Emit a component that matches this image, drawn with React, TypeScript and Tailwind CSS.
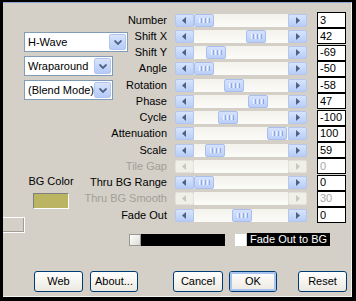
import React from "react";

type Row = { label: string; value: string; thumb: number | null; disabled?: boolean };

const rows: Row[] = [
  { label: "Number", value: "3", thumb: 195 },
  { label: "Shift X", value: "42", thumb: 247 },
  { label: "Shift Y", value: "-69", thumb: 207 },
  { label: "Angle", value: "-50", thumb: 195 },
  { label: "Rotation", value: "-58", thumb: 225 },
  { label: "Phase", value: "47", thumb: 249 },
  { label: "Cycle", value: "-100", thumb: 219 },
  { label: "Attenuation", value: "100", thumb: 268 },
  { label: "Scale", value: "59", thumb: 206 },
  { label: "Tile Gap", value: "0", thumb: null, disabled: true },
  { label: "Thru BG Range", value: "0", thumb: 195 },
  { label: "Thru BG Smooth", value: "30", thumb: null, disabled: true },
  { label: "Fade Out", value: "0", thumb: 233 },
];

function Arrow({ dir, disabled }: { dir: "l" | "r"; disabled?: boolean }) {
  const c = disabled ? "#c9c7ba" : "#4d6185";
  return (
    <div
      className={
        "w-[19px] h-[13px] rounded-[2px] flex items-center justify-center border " +
        (disabled
          ? "bg-[#f0efe8] border-[#e4e2d8]"
          : "bg-gradient-to-b from-[#d8e4fc] to-[#b8cdf6] border-[#b2c6ee]")
      }
    >
      <svg width="5" height="7" viewBox="0 0 5 7">
        {dir === "l" ? (
          <path d="M4 0 L0 3.5 L4 7 Z" fill={c} />
        ) : (
          <path d="M1 0 L5 3.5 L1 7 Z" fill={c} />
        )}
      </svg>
    </div>
  );
}

function Thumb({ left }: { left: number }) {
  return (
    <div
      className="absolute top-0 h-[13px] w-[20px] rounded-[2px] border border-[#a8bfee] bg-gradient-to-b from-[#d6e2fd] to-[#bccff8] flex items-center justify-center gap-[1px]"
      style={{ left }}
    >
      <div className="w-[1px] h-[5px] bg-[#eef3fe]" />
      <div className="w-[1px] h-[5px] bg-[#8ea8e0]" />
      <div className="w-[1px] h-[5px] bg-[#eef3fe]" />
      <div className="w-[1px] h-[5px] bg-[#8ea8e0]" />
      <div className="w-[1px] h-[5px] bg-[#eef3fe]" />
      <div className="w-[1px] h-[5px] bg-[#8ea8e0]" />
    </div>
  );
}

function Scroll({ row }: { row: Row }) {
  return (
    <div className="flex w-[132px] h-[13px]">
      <Arrow dir="l" disabled={row.disabled} />
      <div className="relative flex-1 h-[13px] bg-gradient-to-b from-[#f3f2ec] to-[#fbfbf8]">
        {row.thumb !== null && <Thumb left={row.thumb - 195} />}
      </div>
      <Arrow dir="r" disabled={row.disabled} />
    </div>
  );
}

function Combo({ text, w }: { text: string; w: string }) {
  return (
    <div className={"h-[20px] bg-white border border-[#7f9db9] flex items-center " + w}>
      <span className="flex-1 pl-[3px] text-[11px] leading-none text-black whitespace-nowrap overflow-hidden">{text}</span>
      <div className="w-[17px] h-[16px] mr-[1px] rounded-[2px] bg-gradient-to-b from-[#d8e4fc] to-[#b4caf6] border border-[#b2c6ee] flex items-center justify-center">
        <svg width="8" height="5" viewBox="0 0 8 5">
          <path d="M0.5 0.5 L4 4 L7.5 0.5" stroke="#4d6185" strokeWidth="1.8" fill="none" />
        </svg>
      </div>
    </div>
  );
}

function Btn({ text, w, def }: { text: string; w: string; def?: boolean }) {
  return (
    <div
      className={
        "h-[21px] rounded-[3px] border border-[#003c74] bg-gradient-to-b from-[#ffffff] to-[#ece9e0] flex items-center justify-center text-[11px] text-black " +
        w
      }
    >
      <div
        className={
          "w-full h-full rounded-[2px] flex items-center justify-center " +
          (def ? "border-2 border-[#a9c4f0]" : "")
        }
      >
        {text}
      </div>
    </div>
  );
}

export default function App() {
  return (
    <div
      className="w-[356px] h-[301px] bg-black pl-[3px] pt-[2px] overflow-hidden"
      style={{ fontFamily: '"Liberation Sans", Arial, sans-serif' }}
    >
      <div className="w-[349px] h-[295px] bg-[#d4d0c8] border-t border-[#8ea6d4] border-r border-r-[#f4f3ef] border-b border-b-[#f4f3ef] flex flex-col">
        <div className="grid h-[226px]">
          {/* parameter rows */}
          <div className="col-start-1 row-start-1 pt-[9px] flex flex-col">
            {rows.map((r) => (
              <div key={r.label} className="h-[16.25px] flex items-center">
                <div
                  className={
                    "w-[164px] text-right text-[11px] leading-none whitespace-nowrap " +
                    (r.disabled ? "text-[#a19f96]" : "text-black")
                  }
                >
                  {r.label}
                </div>
                <div className="ml-[8px]">
                  <Scroll row={r} />
                </div>
                <div
                  className={
                    "ml-[10px] w-[29px] h-[16px] bg-white border border-black flex items-center pl-[2px] text-[11px] leading-none " +
                    (r.disabled ? "text-[#a8a8a8]" : "text-black")
                  }
                >
                  {r.value}
                </div>
              </div>
            ))}
          </div>
          {/* left controls */}
          <div className="col-start-1 row-start-1 flex flex-col self-start pointer-events-none">
            <div className="pl-[21px] pt-[29px] flex flex-col gap-[4px]">
              <Combo text="H-Wave" w="w-[104px]" />
              <Combo text="Wraparound" w="w-[89px]" />
              <Combo text="(Blend Mode)" w="w-[89px]" />
            </div>
            <div className="w-[96px] mt-[76px] flex flex-col items-center">
              <div className="text-[11px] leading-none text-black">BG Color</div>
              <div className="mt-[6px] w-[36px] h-[16px] bg-[#bbb462] border border-t-[#808080] border-l-[#808080] border-b-white border-r-white" />
            </div>
            <div className="mt-[8px] w-[22px] h-[16px] border-t border-r border-b border-white shadow-[inset_0_-1px_0_#a09d94,inset_-1px_0_0_#a09d94]" />
          </div>
        </div>
        {/* color bar row */}
        <div className="pl-[126px] flex items-center h-[13px] mt-[4px]">
          <div className="w-[12px] h-[12px] border border-[#9a9890] bg-gradient-to-br from-white to-[#dcdcd6]" />
          <div className="w-[84px] h-[12px] bg-black" />
          <div className="ml-[10px] w-[11px] h-[12px] bg-white" />
          <div className="ml-[1px] w-[83px] h-[13px] bg-black text-white text-[11px] leading-none flex items-center pl-[3px] whitespace-nowrap">
            Fade Out to BG
          </div>
        </div>
        {/* buttons */}
        <div className="flex mt-[25px] pl-[31px]">
          <Btn text="Web" w="w-[49px]" />
          <div className="ml-[7px]">
            <Btn text="About..." w="w-[48px]" />
          </div>
          <div className="ml-[35px]">
            <Btn text="Cancel" w="w-[50px]" />
          </div>
          <div className="ml-[6px]">
            <Btn text="OK" w="w-[48px]" def />
          </div>
          <div className="ml-[21px]">
            <Btn text="Reset" w="w-[49px]" />
          </div>
        </div>
      </div>
    </div>
  );
}
